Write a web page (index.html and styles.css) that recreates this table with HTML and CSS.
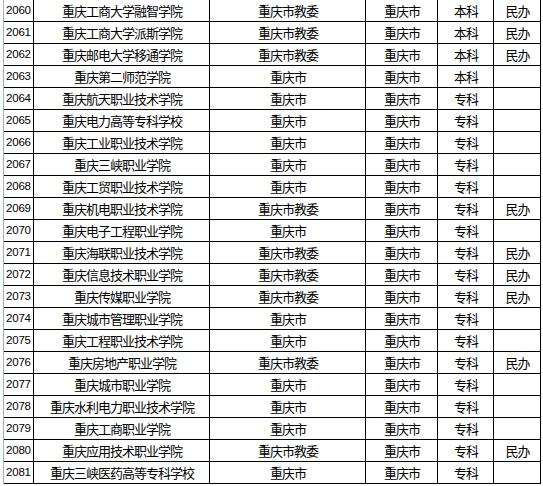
FILE: index.html
```html
<!DOCTYPE html>
<html lang="zh">
<head>
<meta charset="utf-8">
<link rel="stylesheet" href="styles.css">
</head>
<body>
<div class="sheet">
  <div class="row"><div class="c num">2060</div><div class="c">重庆工商大学融智学院</div><div class="c">重庆市教委</div><div class="c">重庆市</div><div class="c">本科</div><div class="c">民办</div></div>
  <div class="row"><div class="c num">2061</div><div class="c">重庆工商大学派斯学院</div><div class="c">重庆市教委</div><div class="c">重庆市</div><div class="c">本科</div><div class="c">民办</div></div>
  <div class="row"><div class="c num">2062</div><div class="c">重庆邮电大学移通学院</div><div class="c">重庆市教委</div><div class="c">重庆市</div><div class="c">本科</div><div class="c">民办</div></div>
  <div class="row"><div class="c num">2063</div><div class="c">重庆第二师范学院</div><div class="c">重庆市</div><div class="c">重庆市</div><div class="c">本科</div><div class="c"></div></div>
  <div class="row"><div class="c num">2064</div><div class="c">重庆航天职业技术学院</div><div class="c">重庆市</div><div class="c">重庆市</div><div class="c">专科</div><div class="c"></div></div>
  <div class="row"><div class="c num">2065</div><div class="c">重庆电力高等专科学校</div><div class="c">重庆市</div><div class="c">重庆市</div><div class="c">专科</div><div class="c"></div></div>
  <div class="row"><div class="c num">2066</div><div class="c">重庆工业职业技术学院</div><div class="c">重庆市</div><div class="c">重庆市</div><div class="c">专科</div><div class="c"></div></div>
  <div class="row"><div class="c num">2067</div><div class="c">重庆三峡职业学院</div><div class="c">重庆市</div><div class="c">重庆市</div><div class="c">专科</div><div class="c"></div></div>
  <div class="row"><div class="c num">2068</div><div class="c">重庆工贸职业技术学院</div><div class="c">重庆市</div><div class="c">重庆市</div><div class="c">专科</div><div class="c"></div></div>
  <div class="row"><div class="c num">2069</div><div class="c">重庆机电职业技术学院</div><div class="c">重庆市教委</div><div class="c">重庆市</div><div class="c">专科</div><div class="c">民办</div></div>
  <div class="row"><div class="c num">2070</div><div class="c">重庆电子工程职业学院</div><div class="c">重庆市</div><div class="c">重庆市</div><div class="c">专科</div><div class="c"></div></div>
  <div class="row"><div class="c num">2071</div><div class="c">重庆海联职业技术学院</div><div class="c">重庆市教委</div><div class="c">重庆市</div><div class="c">专科</div><div class="c">民办</div></div>
  <div class="row"><div class="c num">2072</div><div class="c">重庆信息技术职业学院</div><div class="c">重庆市教委</div><div class="c">重庆市</div><div class="c">专科</div><div class="c">民办</div></div>
  <div class="row"><div class="c num">2073</div><div class="c">重庆传媒职业学院</div><div class="c">重庆市教委</div><div class="c">重庆市</div><div class="c">专科</div><div class="c">民办</div></div>
  <div class="row"><div class="c num">2074</div><div class="c">重庆城市管理职业学院</div><div class="c">重庆市</div><div class="c">重庆市</div><div class="c">专科</div><div class="c"></div></div>
  <div class="row"><div class="c num">2075</div><div class="c">重庆工程职业技术学院</div><div class="c">重庆市</div><div class="c">重庆市</div><div class="c">专科</div><div class="c"></div></div>
  <div class="row"><div class="c num">2076</div><div class="c">重庆房地产职业学院</div><div class="c">重庆市教委</div><div class="c">重庆市</div><div class="c">专科</div><div class="c">民办</div></div>
  <div class="row"><div class="c num">2077</div><div class="c">重庆城市职业学院</div><div class="c">重庆市</div><div class="c">重庆市</div><div class="c">专科</div><div class="c"></div></div>
  <div class="row"><div class="c num">2078</div><div class="c">重庆水利电力职业技术学院</div><div class="c">重庆市</div><div class="c">重庆市</div><div class="c">专科</div><div class="c"></div></div>
  <div class="row"><div class="c num">2079</div><div class="c">重庆工商职业学院</div><div class="c">重庆市</div><div class="c">重庆市</div><div class="c">专科</div><div class="c"></div></div>
  <div class="row"><div class="c num">2080</div><div class="c">重庆应用技术职业学院</div><div class="c">重庆市教委</div><div class="c">重庆市</div><div class="c">专科</div><div class="c">民办</div></div>
  <div class="row"><div class="c num">2081</div><div class="c">重庆三峡医药高等专科学校</div><div class="c">重庆市</div><div class="c">重庆市</div><div class="c">专科</div><div class="c"></div></div>
</div>
</body>
</html>
```

FILE: styles.css
```css
html, body {
  margin: 0;
  padding: 0;
  background: #ffffff;
}

.sheet {
  margin-left: 3px;
  width: 538px;
  border-left: 1px solid #9fb2cf;
  font-family: "Noto Sans CJK SC", "Liberation Sans", sans-serif;
  font-size: 13px;
  letter-spacing: -1px;
  color: #000;
}

.row {
  display: grid;
  grid-template-columns: 30px 176px 156px 72px 56px 47px;
  height: 22px;
}

.c {
  box-sizing: border-box;
  height: 22px;
  padding-left: 1px;
  border-right: 1px solid #000;
  border-bottom: 1px solid #000;
  display: flex;
  align-items: center;
  justify-content: center;
  line-height: 1;
  white-space: nowrap;
  overflow: hidden;
}

.num {
  justify-content: flex-start;
  padding-left: 2px;
  font-family: "Liberation Sans", Arial, sans-serif;
  font-size: 11.5px;
  letter-spacing: -0.2px;
}
```
